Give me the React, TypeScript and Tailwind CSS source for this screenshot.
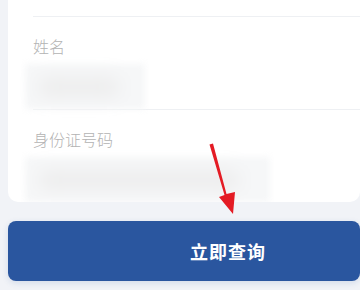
import React from 'react';

const font = { fontFamily: '"Noto Sans CJK SC", "Noto Sans", sans-serif' };

// blurred (masked) value under each label
const Masked: React.FC<{ w: string; inner: string }> = ({ w, inner }) => (
  <div className={`mt-[8px] -ml-[8px] ${w} h-[50px] bg-[#f6f7f8] blur-[3px] flex items-center pl-[14px]`}>
    <div className={`${inner} h-[18px] rounded-full bg-[#ececec] blur-[8px]`} />
  </div>
);

const Field: React.FC<{ label: string; children?: React.ReactNode }> = ({ label, children }) => (
  <div className="border-t border-[#eef0f3] ml-[25px] pt-[19px] h-[93px] flex flex-col">
    <div className="text-[16px] leading-[20px] font-light text-[#b3b3b3]">{label}</div>
    {children}
  </div>
);

export default function App() {
  return (
    <div className="w-[360px] h-[290px] bg-[#f1f3f7] overflow-hidden relative flex flex-col" style={font}>
      <div className="ml-[8px] -mt-[8px] h-[210px] bg-white rounded-b-[10px] pt-[24px] overflow-hidden">
        <Field label="姓名">
          <Masked w="w-[120px]" inner="w-[80px]" />
        </Field>
        <Field label="身份证号码">
          <Masked w="w-[245px]" inner="w-[200px]" />
        </Field>
      </div>
      <button className="ml-[8px] mt-[19px] h-[60px] bg-[#2a569f] rounded-[8px] flex items-center justify-center pl-[88px] shadow-[0_2px_6px_rgba(42,86,159,0.15)]">
        <span className="text-white text-[18px] font-bold tracking-[1px]">立即查询</span>
      </button>
      <svg className="absolute left-0 top-0" width="360" height="290" viewBox="0 0 360 290">
        <polygon points="209.5,144.5 213,143.5 226.5,194 235,192 233,214 219,197 224.5,195" fill="#e41b24" />
      </svg>
    </div>
  );
}
